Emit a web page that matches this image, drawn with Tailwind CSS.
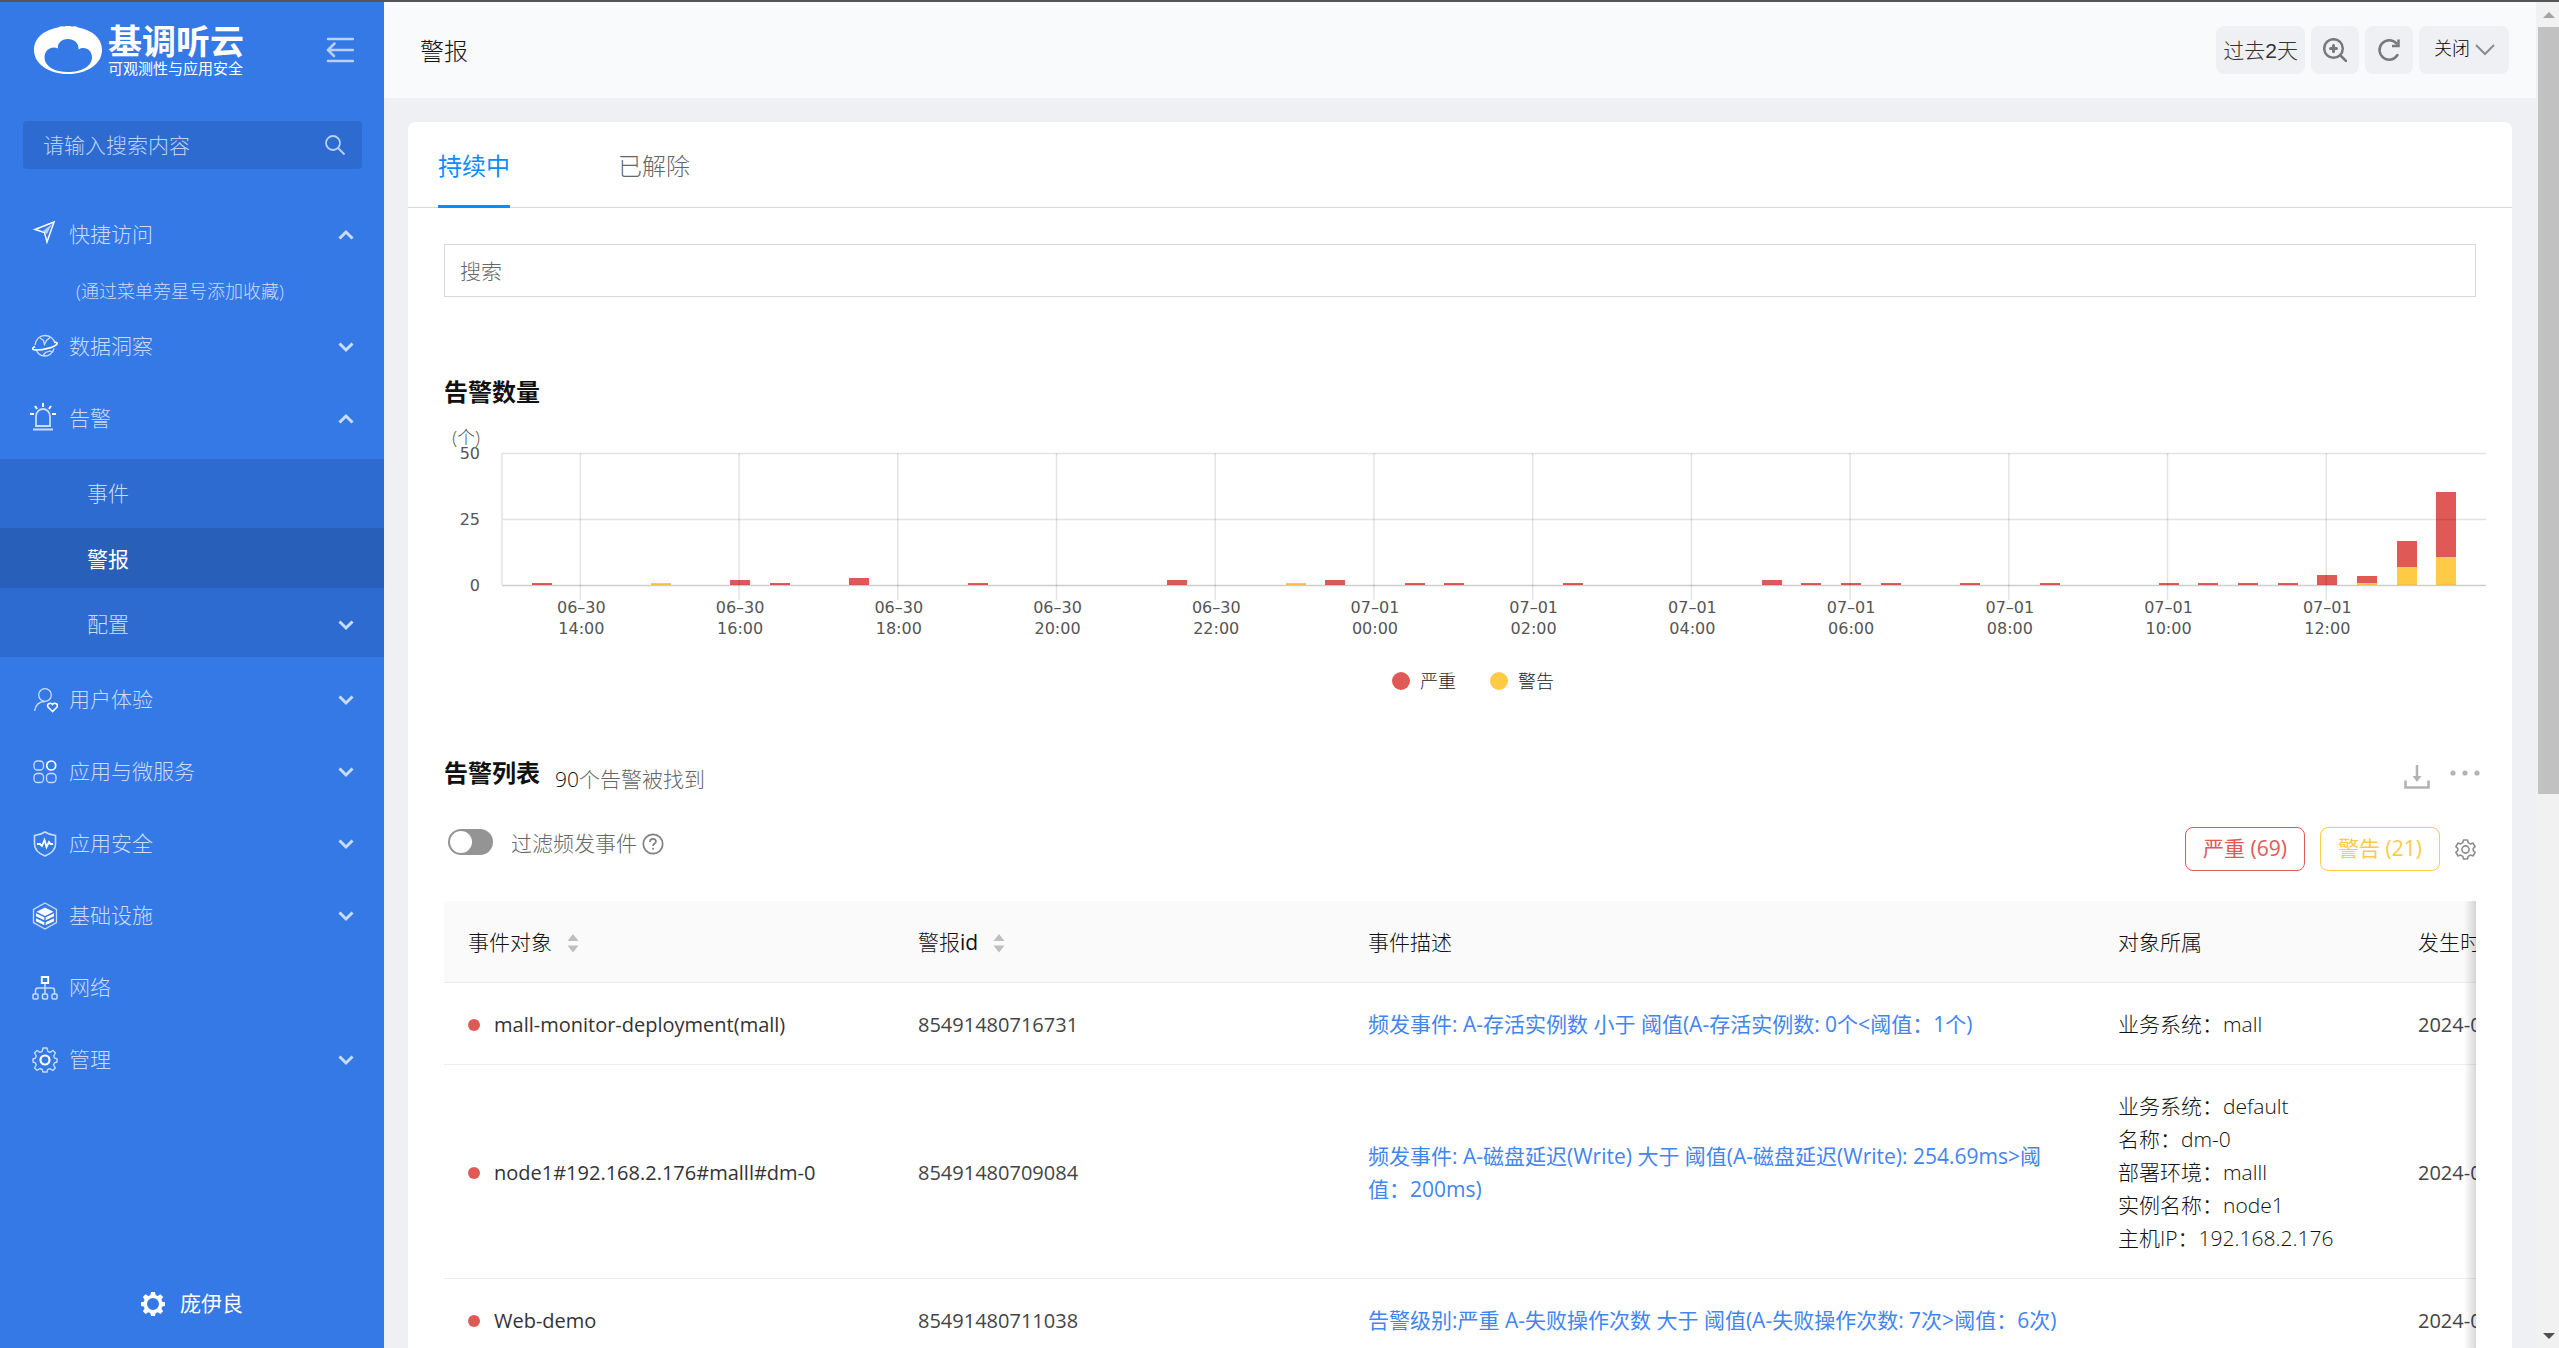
<!DOCTYPE html>
<html lang="zh-CN">
<head>
<meta charset="utf-8">
<title>警报</title>
<script src="https://cdn.jsdelivr.net/npm/@tailwindcss/browser@4"></script>
</head>
<body class="flex h-screen flex-col overflow-hidden border-t-2 border-[#555555] bg-[#eff0f4] font-['Open_Sans','Noto_Sans_CJK_SC',sans-serif] text-[21px] font-light text-[#111111]">
<svg class="hidden">
  <symbol id="down" viewBox="0 0 16 12"><path d="M1.5 2.5 8 9l6.500-6.500" fill="none" stroke="currentColor" stroke-width="3"/></symbol>
  <symbol id="up" viewBox="0 0 16 12"><path d="M1.500 9.500 8 3l6.500 6.500" fill="none" stroke="currentColor" stroke-width="3"/></symbol>
  <symbol id="sort" viewBox="0 0 12 20"><path d="M6 1l5.500 7H.5zM6 19.500l5.500-7H.5z" fill="#bfbfbf"/></symbol>
</svg>
<div class="flex min-h-0 flex-1">

  <aside class="flex w-96 shrink-0 flex-col bg-[#3579e6] text-[#c9dcfa]">
    <div class="flex h-[119px] items-start pt-5 pl-[34px] pr-[30px]">
      <a href="#" class="flex gap-1.5 text-white">
        <svg class="mt-1 h-12 w-[68px]" viewBox="0 0 68 48"><path fill="#fff" fill-rule="evenodd" d="M24 1.500Q27-.5 30 .6 34-.8 38 .6q4-1 6 .9C58 4 68 12 68 24 68 38 53 48 34 48S0 38 0 24C0 12 10 4 24 1.500zM24 22.500c-7-3-13.500 2-13.500 9C10.500 40 20 46 34 46s24-6 24-14.500c0-7-6.500-12-13.500-8C45 17 40 13 34 13s-11 4-10 9.500z"/></svg>
        <span class="flex flex-col">
          <span class="text-[34px] font-bold leading-[38px]">基调听云</span>
          <span class="text-[15px] font-normal leading-4">可观测性与应用安全</span>
        </span>
      </a>
      <button type="button" aria-label="收起菜单" class="ml-auto mt-[15px]">
        <svg class="h-[26px] w-7" viewBox="0 0 28 26" fill="none" stroke="#b9d1f7" stroke-width="2.500" stroke-linecap="round" stroke-linejoin="round"><path d="M2 2h25M2 24h25M2.500 13H27M8.500 6.500 2 13l6 6"/></svg>
      </button>
    </div>
    <label class="ml-[23px] mr-[22px] flex h-12 items-center rounded bg-[#2d6bd0] pl-5 pr-4">
      <input type="text" aria-label="请输入搜索内容" placeholder="请输入搜索内容" class="min-w-0 flex-1 bg-transparent pt-0.5 outline-none placeholder:text-[#bcd3f7]">
      <svg class="size-[22px]" viewBox="0 0 22 22" fill="none" stroke="#b9d1f7" stroke-width="1.800"><circle cx="9" cy="9" r="7"/><path d="m14 14 6.500 6.500"/></svg>
    </label>

    <nav class="mt-[30px] flex flex-col">
      <button type="button" class="flex h-[72px] items-center gap-[11px] pl-8 pr-[30px]">
        <svg class="mb-1 size-[26px]" viewBox="0 0 26 26" fill="none" stroke="#fff" stroke-width="1.500"><path d="M22 2 3 9.500l9.500 3L15 22z"/><path d="m20 4-9 7 4 3z" fill="#b9d1f7" stroke="none"/></svg>
        快捷访问<svg class="ml-auto h-3 w-4"><use href="#up"/></svg>
      </button>
      <p class="h-10 pl-[76px] text-lg leading-10">(通过菜单旁星号添加收藏)</p>
      <button type="button" class="flex h-[72px] items-center gap-[11px] pl-8 pr-[30px]">
        <svg class="size-[26px]" viewBox="0 0 26 26" fill="none" stroke="currentColor" stroke-width="1.300"><path d="M3 11C4 5 8 1.500 13 1.500S22 5 23 9M4 15.500c1.500 4 5 6.500 9 6.500s8-3 9-7.500M8 4l3.500 2.500 1 4 2-4L18 3.500M11 21.500l2.500-3L18 17l2 1"/><path stroke="#fff" stroke-width="1.600" d="M3 12.500C-.5 14.500-.5 16 4 16c8 0 19-3 21-6 .5-1.500-1-2-3-1.500"/></svg>
        数据洞察<svg class="ml-auto h-3 w-4"><use href="#down"/></svg>
      </button>
      <button type="button" class="mb-1 flex h-[72px] items-center gap-[11px] pl-8 pr-[30px]">
        <svg class="-ml-0.5 mr-0.5 mb-1 h-7 w-[26px]" viewBox="0 0 26 28" fill="none" stroke="currentColor" stroke-width="1.800"><path d="M6 23V13.500a7 7.500 0 0 1 14 0V23zM3 26.500h20"/><path stroke="#fff" stroke-width="2" d="M13 0v4M5 3l2 3M21 3l-2 3M0 11h4M22 11h4"/></svg>
        告警<svg class="ml-auto h-3 w-4"><use href="#up"/></svg>
      </button>
      <div class="mb-[7px] flex flex-col bg-[#2d6bd0]">
        <a href="#" class="flex h-[69px] items-center pl-[87px]">事件</a>
        <a href="#" aria-current="page" class="flex h-[60px] items-center bg-[#285fb8] pt-1 pl-[87px] font-normal text-white">警报</a>
        <button type="button" class="flex h-[69px] items-center pt-1 pl-[87px] pr-[30px]">配置<svg class="ml-auto h-3 w-4"><use href="#down"/></svg></button>
      </div>
      <button type="button" class="flex h-[72px] items-center gap-[11px] pl-8 pr-[30px]">
        <svg class="size-[26px]" viewBox="0 0 26 26" fill="none" stroke="currentColor" stroke-width="1.300"><circle cx="13" cy="8" r="6.300"/><path d="M2.500 24C3.500 18 7 14.500 13 14.500"/><path stroke="#fff" stroke-width="1.600" d="M20.500 24.500 16 20c-1.500-3 2-5 4.500-2.500C23 15 26.500 17 25 20z"/></svg>
        用户体验<svg class="ml-auto h-3 w-4"><use href="#down"/></svg>
      </button>
      <button type="button" class="flex h-[72px] items-center gap-[11px] pl-8 pr-[30px]">
        <svg class="size-[26px]" viewBox="0 0 26 26" fill="none" stroke="currentColor" stroke-width="1.300"><rect x="2" y="2" width="9.500" height="9" rx="3.500"/><rect x="2" y="14.500" width="9.500" height="9" rx="3.500"/><rect x="14.500" y="14.500" width="9.500" height="9" rx="3.500"/><circle cx="19.200" cy="6.500" r="4.500" stroke="#fff" stroke-width="1.700"/></svg>
        应用与微服务<svg class="ml-auto h-3 w-4"><use href="#down"/></svg>
      </button>
      <button type="button" class="flex h-[72px] items-center gap-[11px] pl-8 pr-[30px]">
        <svg class="size-[26px]" viewBox="0 0 26 26" fill="none" stroke="currentColor" stroke-width="1.600"><path d="M13 1c3 2 6 3 10.500 3.500V13c0 6-4 9.500-10.500 12C6.500 22.500 2.500 19 2.500 13V4.500C7 4 10 3 13 1z"/><path stroke="#fff" stroke-width="1.800" d="M5 13h3l2 2 2.500-6 2 7 2.500-5 1.500 2H21"/></svg>
        应用安全<svg class="ml-auto h-3 w-4"><use href="#down"/></svg>
      </button>
      <button type="button" class="flex h-[72px] items-center gap-[11px] pl-8 pr-[30px]">
        <svg class="h-7 w-[26px]" viewBox="0 0 26 28" fill="none" stroke="currentColor" stroke-width="1.300"><path d="m13 1 11.500 6.500v13L13 27 1.500 20.500v-13z"/><path fill="#fff" stroke="none" d="m13 5.500 8.500 4.200-8.500 4.200-8.500-4.200zM4 11.300l8.300 4v3L4 14.300zm0 5 8.300 4v3L4 19.300zM22 11.300l-8.300 4v3l8.300-4zm0 5-8.300 4v3l8.300-4z"/></svg>
        基础设施<svg class="ml-auto h-3 w-4"><use href="#down"/></svg>
      </button>
      <a href="#" class="flex h-[72px] items-center gap-[11px] pl-8 pr-[30px]">
        <svg class="size-[26px]" viewBox="0 0 26 26" fill="none" stroke="currentColor" stroke-width="1.500"><path d="M13 8.500V19M3.500 19v-3.500Q3.500 13 6 13h14q2.500 0 2.500 2.500V19"/><rect x="1" y="19" width="5" height="5" rx="1"/><rect x="10.500" y="19" width="5" height="5" rx="1"/><rect x="20" y="19" width="5" height="5" rx="1"/><rect x="9.800" y="2" width="6.400" height="6" stroke="#fff" stroke-width="1.900"/></svg>
        网络
      </a>
      <button type="button" class="flex h-[72px] items-center gap-[11px] pl-8 pr-[30px]">
        <svg class="size-[26px]" viewBox="0 0 26 26" fill="none" stroke="currentColor" stroke-width="1.400" stroke-linejoin="round"><path d="M11 1h4l.8 3.300 2.200 1 3-1.800 2.500 2.500L21.700 9l1 2.200L25 12v3l-2.500.8-1 2.200 1.800 3-2.500 2.500-3-1.800-2.200 1L15 25h-4l-.8-2.500-2.200-1-3 1.800L2.500 21l1.800-3-1-2.200L1 15v-3l2.300-.8 1-2.200L2.500 6 5 3.500l3 1.800 2.200-1z"/><circle cx="13" cy="13" r="4.500" stroke="#fff" stroke-width="2.200"/></svg>
        管理<svg class="ml-auto h-3 w-4"><use href="#down"/></svg>
      </button>
    </nav>
    <button type="button" class="mt-auto mb-7 flex h-8 items-center justify-center gap-[15px] font-normal text-white">
      <svg class="size-6" viewBox="0 0 24 24"><path fill="#fff" fill-rule="evenodd" d="M10 0h4l.7 3.200 2 .9L19.500 2.300l2.600 2.700-1.700 2.700.8 2L24 10.200v3.800l-2.800.6-.8 2 1.700 2.700-2.600 2.600-2.800-1.700-2 .8L14 24h-4l-.7-3-2-.8-2.800 1.700-2.600-2.600 1.700-2.700-.8-2L0 14v-3.800l2.800-.5.8-2L1.900 5l2.600-2.700 2.800 1.800 2-.9zM12 6a6 6 0 1 0 0 12 6 6 0 0 0 0-12z"/></svg>
      庞伊良
    </button>
  </aside>

  <main class="min-w-0 flex-1">
    <header class="flex h-24 items-center gap-1.5 bg-[#f9fafc] pl-9 pr-[27px]">
      <h1 class="mr-auto pt-0.5 text-2xl">警报</h1>
      <button type="button" class="h-12 rounded-lg bg-[#eff0f4] px-[7px] pt-0.5 font-['Liberation_Sans','Noto_Sans_CJK_SC',sans-serif] text-[#333333]">过去2天</button>
      <button type="button" aria-label="放大" class="grid size-12 place-items-center rounded-lg bg-[#eff0f4] text-[#77787b]">
        <svg class="size-6" viewBox="0 0 24 24" fill="none" stroke="currentColor" stroke-width="2.500" stroke-linecap="round"><circle cx="10.500" cy="10.500" r="9.300"/><path d="m17.500 17.500 5.500 5.500"/><path stroke-width="3" d="M10.500 7.500v6M7.500 10.500h6"/></svg>
      </button>
      <button type="button" aria-label="刷新" class="grid size-12 place-items-center rounded-lg bg-[#eff0f4] text-[#77787b]">
        <svg class="size-6" viewBox="0 0 24 24" fill="none" stroke="currentColor" stroke-width="2.500" stroke-linecap="round"><path d="M20.500 17a9.700 9.700 0 1 1-1-11.500"/><path stroke-linecap="butt" d="M21.500 1.500v6.500h-6.500"/></svg>
      </button>
      <div class="relative">
        <select aria-label="自动刷新" class="h-12 w-[90px] appearance-none rounded-lg bg-[#eff0f4] pl-[15px] pb-1 text-lg text-black"><option>关闭</option></select>
        <svg class="pointer-events-none absolute right-3.5 top-4 h-4 w-5" viewBox="0 0 20 16" fill="none" stroke="#8c8c8c" stroke-width="2"><path d="m1 3 9 9 9-9"/></svg>
      </div>
    </header>

    <section class="ml-6 mr-6 mt-6 rounded-t-lg bg-white">
      <div role="tablist" class="flex h-[86px] items-stretch gap-[108px] border-b border-[#d9d9d9] pl-[30px] text-2xl">
        <button type="button" role="tab" aria-selected="true" class="-mb-px border-b-3 border-[#0a8cff] pt-1 font-normal text-[#0a8cff]">持续中</button>
        <button type="button" role="tab" aria-selected="false" class="-mb-px border-b-3 border-transparent pt-1 text-[#666666]">已解除</button>
      </div>

      <div class="px-9 pt-9">
        <input type="text" aria-label="搜索" placeholder="搜索" class="block h-[53px] w-full border border-[#d9d9d9] px-[15px] outline-none placeholder:text-[#666666]">

        <h2 class="mt-[79px] text-2xl font-bold leading-8">告警数量</h2>
        <div class="-mr-[10px] flex pt-[19px] text-[#555555]">
          <div class="flex w-[58px] flex-col pr-[22px] text-right">
            <span class="h-[17px] text-lg leading-5">(个)</span>
            <div class="flex h-[152px] flex-col justify-between font-['DejaVu_Sans',sans-serif] text-base leading-5 font-normal"><span>50</span><span>25</span><span>0</span></div>
          </div>
          <div class="min-w-0 flex-1 pt-[26px]">
            <svg id="plot" class="block h-36 w-full overflow-visible" viewBox="0 0 1984 144" preserveAspectRatio="none"></svg>
            <div id="ticks" class="grid w-[96%] grid-cols-12 text-center font-['DejaVu_Sans',sans-serif] text-base leading-[21px] font-normal"></div>
          </div>
        </div>
        <div class="mt-7 flex items-center justify-center gap-[34px] pl-[26px] text-lg leading-7 text-[#222222]">
          <span class="flex items-center gap-2.5"><i class="size-[18px] rounded-full bg-[#df5a56]"></i>严重</span>
          <span class="flex items-center gap-2.5"><i class="size-[18px] rounded-full bg-[#ffca45]"></i>警告</span>
        </div>

        <div class="mt-[62px] flex h-8 items-center">
          <h2 class="text-2xl font-bold leading-8">告警列表</h2>
          <p class="ml-[15px] pt-3 leading-8 text-[#666666]"><span class="text-[#111111]">90</span>个告警被找到</p>
          <button type="button" aria-label="下载" class="ml-auto"><svg class="mt-2 h-6 w-[26px]" viewBox="0 0 26 24" fill="none" stroke="#b3b3b3" stroke-width="2.500"><path d="M1.500 15.500v7h23v-7M13 0v13"/><path d="m8.500 11 4.500 6 4.500-6z" fill="#b3b3b3" stroke="none"/></svg></button>
          <button type="button" aria-label="更多" class="-mr-1 ml-5"><svg class="h-6 w-[30px]" viewBox="0 0 30 24" fill="#b3b3b3"><circle cx="3" cy="12" r="2.600"/><circle cx="15" cy="12" r="2.600"/><circle cx="27" cy="12" r="2.600"/></svg></button>
        </div>

        <div class="mt-[38px] flex h-11 items-center">
          <label class="flex items-center gap-[18px] pb-2.5 pl-1 text-[#666666]">
            <input type="checkbox" role="switch" class="mb-1 flex h-[26px] w-[45px] appearance-none items-center rounded-full bg-[#949494] pl-0.5 before:block before:size-[22px] before:rounded-full before:bg-white">
            过滤频发事件
          </label>
          <svg class="mb-2.5 ml-[5px] size-[22px]" viewBox="0 0 22 22" fill="none" stroke="#808080" stroke-width="1.700"><circle cx="11" cy="11" r="9.700"/><path d="M8 9c0-4 6-4 6-.5 0 2-3 2-3 4.500"/><circle cx="11" cy="15.700" r="1" fill="#808080" stroke="none"/></svg>
          <button type="button" class="ml-auto h-11 w-[120px] rounded-lg border border-[#df5a56] font-normal text-[#df5a56]">严重 (69)</button>
          <button type="button" class="ml-[15px] h-11 w-[120px] rounded-lg border border-[#ffca45] font-normal text-[#ffca45]">警告 (21)</button>
          <button type="button" aria-label="设置" class="ml-[15px]"><svg class="size-[21px]" viewBox="0 0 21 21" fill="none" stroke="#8a8a8a" stroke-width="1.600" stroke-linejoin="round"><path d="M8.500 1h4l.7 2.600 2.300 1.300 2.600-.8 2 3.500-1.900 1.900v2.000l1.900 1.900-2 3.500-2.600-.8-2.300 1.300-.7 2.600h-4l-.7-2.600-2.300-1.300-2.600.8-2-3.500 1.900-1.900v-2L.9 7.600l2-3.500 2.600.8 2.300-1.300z"/><circle cx="10.500" cy="10.500" r="3.600"/></svg></button>
        </div>

        <div class="relative mt-[30px] overflow-hidden rounded-tl">
          <table class="w-[2250px] table-fixed text-left leading-[33px]">
            <colgroup><col class="w-[450px]"><col class="w-[450px]"><col class="w-[750px]"><col class="w-[300px]"><col class="w-[300px]"></colgroup>
            <thead>
              <tr class="border-b border-[#ececec] bg-[#fafafa]">
                <th class="px-6 pt-[25px] pb-[23px] font-light"><span class="flex items-center gap-[15px]">事件对象<svg class="h-5 w-3"><use href="#sort"/></svg></span></th>
                <th class="px-6 pt-[25px] pb-[23px] font-light"><span class="flex items-center gap-[15px]"><span>警报<span class="font-medium">id</span></span><svg class="h-5 w-3"><use href="#sort"/></svg></span></th>
                <th class="px-6 pt-[25px] pb-[23px] font-light">事件描述</th>
                <th class="px-6 pt-[25px] pb-[23px] font-light">对象所属</th>
                <th class="px-6 pt-[25px] pb-[23px] font-light">发生时间</th>
              </tr>
            </thead>
            <tbody>
              <tr class="border-b border-[#ececec]">
                <td class="px-6 pt-[25px] pb-[23px] text-xl leading-[33px] font-normal text-[#333333]"><span class="flex items-center gap-3.5"><i class="size-3 rounded-full bg-[#df5a56]"></i>mall-monitor-deployment(mall)</span></td>
                <td class="px-6 pt-[25px] pb-[23px] text-xl leading-[33px] font-normal text-[#444444]">85491480716731</td>
                <td class="px-6 pt-[25px] pb-[23px]"><a href="#" class="font-normal text-[#4285f0]">频发事件: A-存活实例数 小于 阈值(A-存活实例数: 0个&lt;阈值：1个)</a></td>
                <td class="px-6 pt-[25px] pb-[23px]">业务系统：mall</td>
                <td class="px-6 pt-[25px] pb-[23px] text-xl leading-[33px] font-normal text-[#444444]">2024-07-01</td>
              </tr>
              <tr class="border-b border-[#ececec]">
                <td class="px-6 pt-[25px] pb-[23px] text-xl leading-[33px] font-normal text-[#333333]"><span class="flex items-center gap-3.5"><i class="size-3 rounded-full bg-[#df5a56]"></i>node1#192.168.2.176#malll#dm-0</span></td>
                <td class="px-6 pt-[25px] pb-[23px] text-xl leading-[33px] font-normal text-[#444444]">85491480709084</td>
                <td class="px-6 pt-[25px] pb-[23px]"><a href="#" class="font-normal text-[#4285f0]">频发事件: A-磁盘延迟(Write) 大于 阈值(A-磁盘延迟(Write): 254.69ms&gt;阈值：200ms)</a></td>
                <td class="px-6 pt-[25px] pb-[23px]">业务系统：default<br>名称：dm-0<br>部署环境：malll<br>实例名称：node1<br>主机IP：192.168.2.176</td>
                <td class="px-6 pt-[25px] pb-[23px] text-xl leading-[33px] font-normal text-[#444444]">2024-07-01</td>
              </tr>
              <tr class="border-b border-[#ececec]">
                <td class="px-6 pt-[25px] pb-[23px] text-xl leading-[33px] font-normal text-[#333333]"><span class="flex items-center gap-3.5"><i class="size-3 rounded-full bg-[#df5a56]"></i>Web-demo</span></td>
                <td class="px-6 pt-[25px] pb-[23px] text-xl leading-[33px] font-normal text-[#444444]">85491480711038</td>
                <td class="px-6 pt-[25px] pb-[23px]"><a href="#" class="font-normal text-[#4285f0]">告警级别:严重 A-失败操作次数 大于 阈值(A-失败操作次数: 7次&gt;阈值：6次)</a></td>
                <td class="px-6 pt-[25px] pb-[23px]"></td>
                <td class="px-6 pt-[25px] pb-[23px] text-xl leading-[33px] font-normal text-[#444444]">2024-07-01</td>
              </tr>
            </tbody>
          </table>
          <div class="pointer-events-none absolute inset-y-0 right-0 w-3 bg-linear-to-r from-transparent to-black/15"></div>
        </div>
      </div>
    </section>
  </main>

  <div aria-hidden="true" class="flex w-[23px] shrink-0 flex-col items-center bg-[#f1f1f1] pl-0.5">
    <svg class="h-[25px] w-3 shrink-0" viewBox="0 0 12 25"><path fill="#a3a3a3" d="m6 10 6 6H0z"/></svg>
    <div class="h-[57%] w-full bg-[#c1c1c1]"></div>
    <svg class="mt-auto h-[25px] w-3 shrink-0" viewBox="0 0 12 25"><path fill="#505050" d="m6 16 6-6H0z"/></svg>
  </div>
</div>
<script>
  // half-hour slots: [slot, severe, warning]
  const bars = [[1,1,0],[4,0,1],[6,2,0],[7,1,0],[9,3,0],[12,1,0],[17,2,0],[20,0,1],[21,2,0],[23,1,0],[24,1,0],[27,1,0],[32,2,0],[33,1,0],[34,1,0],[35,1,0],[37,1,0],[39,1,0],[42,1,0],[43,1,0],[44,1,0],[45,1,0],[46,4,0],[47,3,1],[48,10,7],[49,25,11]];
  const unit = 130 / 50, step = 1984 / 50;
  let svg = '';
  for (const [slot, severe, warning] of bars) {
    const x = Math.round(slot * step - 10), w = Math.floor(warning * unit), s = Math.floor(severe * unit);
    svg += `<rect x="${x}" y="${132 - w}" width="20" height="${w}" fill="#ffca45"/><rect x="${x}" y="${132 - w - s}" width="20" height="${s}" fill="#df5a56"/>`;
  }
  for (const y of [0, 66]) svg += `<path d="M0 ${y}.5H1984" stroke="#000" stroke-opacity=".11" stroke-width="1.500"/>`;
  svg += '<path d="M0 132.500H1984" stroke="#000" stroke-opacity=".2" stroke-width="1.500"/><path d="M0 0V132" stroke="#e3e3e3" stroke-width="1.500"/>';
  const labels = ['06-30 14:00','06-30 16:00','06-30 18:00','06-30 20:00','06-30 22:00','07-01 00:00','07-01 02:00','07-01 04:00','07-01 06:00','07-01 08:00','07-01 10:00','07-01 12:00'];
  let ticks = '';
  labels.forEach((label, i) => {
    const x = (2 + 4 * i) * step - 1;
    svg += `<path d="M${x} 0V147" stroke="#000" stroke-opacity=".11" stroke-width="1.500"/>`;
    ticks += `<span>${label.replace('-', '–').replace(' ', '<br>')}</span>`;
  });
  document.getElementById('plot').innerHTML = svg;
  document.getElementById('ticks').innerHTML = ticks;
</script>
</body>
</html>
